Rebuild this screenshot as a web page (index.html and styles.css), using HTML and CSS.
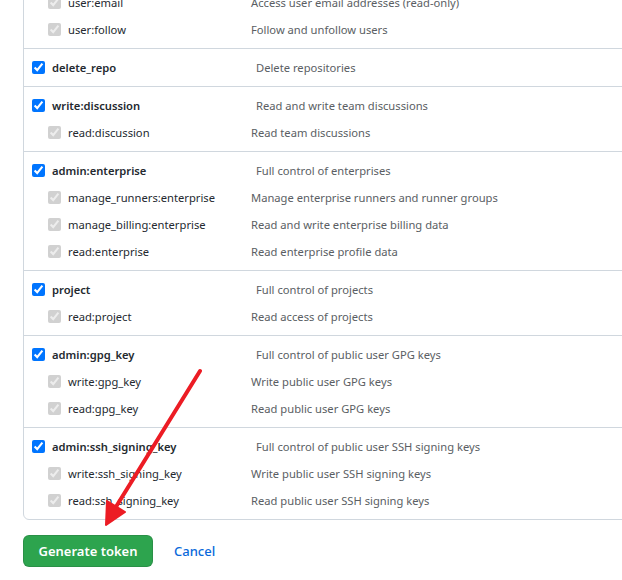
FILE: index.html
```html
<!DOCTYPE html>
<html lang="en">
<head>
<meta charset="utf-8">
<title>New personal access token</title>
<link rel="stylesheet" href="styles.css">
</head>
<body>
<div class="page">
  <div class="scopes">
    <div class="group">
      <div class="row parent"><label class="name"><input type="checkbox" checked>user</label><span class="desc">Update ALL user data</span></div>
      <div class="row child"><label class="name"><input type="checkbox" checked disabled>read:user</label><span class="desc">Read ALL user profile data</span></div>
      <div class="row child"><label class="name"><input type="checkbox" checked disabled>user:email</label><span class="desc">Access user email addresses (read-only)</span></div>
      <div class="row child"><label class="name"><input type="checkbox" checked disabled>user:follow</label><span class="desc">Follow and unfollow users</span></div>
    </div>
    <div class="group">
      <div class="row parent"><label class="name"><input type="checkbox" checked>delete_repo</label><span class="desc">Delete repositories</span></div>
    </div>
    <div class="group">
      <div class="row parent"><label class="name"><input type="checkbox" checked>write:discussion</label><span class="desc">Read and write team discussions</span></div>
      <div class="row child"><label class="name"><input type="checkbox" checked disabled>read:discussion</label><span class="desc">Read team discussions</span></div>
    </div>
    <div class="group">
      <div class="row parent"><label class="name"><input type="checkbox" checked>admin:enterprise</label><span class="desc">Full control of enterprises</span></div>
      <div class="row child"><label class="name"><input type="checkbox" checked disabled>manage_runners:enterprise</label><span class="desc">Manage enterprise runners and runner groups</span></div>
      <div class="row child"><label class="name"><input type="checkbox" checked disabled>manage_billing:enterprise</label><span class="desc">Read and write enterprise billing data</span></div>
      <div class="row child"><label class="name"><input type="checkbox" checked disabled>read:enterprise</label><span class="desc">Read enterprise profile data</span></div>
    </div>
    <div class="group">
      <div class="row parent"><label class="name"><input type="checkbox" checked>project</label><span class="desc">Full control of projects</span></div>
      <div class="row child"><label class="name"><input type="checkbox" checked disabled>read:project</label><span class="desc">Read access of projects</span></div>
    </div>
    <div class="group">
      <div class="row parent"><label class="name"><input type="checkbox" checked>admin:gpg_key</label><span class="desc">Full control of public user GPG keys</span></div>
      <div class="row child"><label class="name"><input type="checkbox" checked disabled>write:gpg_key</label><span class="desc">Write public user GPG keys</span></div>
      <div class="row child"><label class="name"><input type="checkbox" checked disabled>read:gpg_key</label><span class="desc">Read public user GPG keys</span></div>
    </div>
    <div class="group">
      <div class="row parent"><label class="name"><input type="checkbox" checked>admin:ssh_signing_key</label><span class="desc">Full control of public user SSH signing keys</span></div>
      <div class="row child"><label class="name"><input type="checkbox" checked disabled>write:ssh_signing_key</label><span class="desc">Write public user SSH signing keys</span></div>
      <div class="row child"><label class="name"><input type="checkbox" checked disabled>read:ssh_signing_key</label><span class="desc">Read public user SSH signing keys</span></div>
    </div>
  </div>
  <div class="actions">
    <button class="btn-primary" type="button">Generate token</button>
    <a class="btn-link" href="#">Cancel</a>
  </div>
  <svg class="arrow" width="622" height="580" viewBox="0 0 622 580" aria-hidden="true">
    <line x1="200" y1="371" x2="114" y2="510" stroke="#ec1c24" stroke-width="4" stroke-linecap="round"/>
    <polygon points="106,525 107,501 125,512" fill="#ec1c24" stroke="#ec1c24" stroke-width="2" stroke-linejoin="round"/>
  </svg>
</div>
</body>
</html>
```

FILE: styles.css
```css
html, body {
  margin: 0;
  padding: 0;
  overflow: hidden;
  background: #ffffff;
}

.page {
  position: relative;
  width: 622px;
  height: 580px;
  overflow: hidden;
  font-family: "Noto Sans", "Liberation Sans", sans-serif;
  font-size: 11.2px;
  color: #24292f;
}

.scopes {
  margin: -71px 0 0 23px;
  width: 660px;
  border: 1px solid #d0d7de;
  border-radius: 6px;
}

.group {
  padding: 5px 0;
  border-top: 1px solid #d0d7de;
}

.group:first-child {
  border-top: 0;
}

.row {
  display: flex;
  align-items: center;
  height: 27px;
}

.name {
  display: flex;
  align-items: center;
  flex: none;
}

.name input {
  margin: 0 7px 0 0;
  width: 13px;
  height: 13px;
}

.parent .name {
  width: 224px;
  padding-left: 8px;
  font-weight: 600;
}

.child .name {
  width: 203px;
  padding-left: 24px;
}

.desc {
  color: #5a5e63;
}

.actions {
  display: flex;
  align-items: center;
  gap: 21px;
  margin: 15px 0 0 23px;
}

.btn-primary {
  height: 32px;
  width: 130px;
  padding: 0;
  border: 1px solid rgba(27, 31, 36, 0.15);
  border-radius: 6px;
  background: #2da44e;
  color: #ffffff;
  font-family: "Noto Sans", "Liberation Sans", sans-serif;
  font-size: 13px;
  font-weight: 600;
}

.btn-link {
  color: #0969da;
  text-decoration: none;
  font-family: "Noto Sans", "Liberation Sans", sans-serif;
  font-size: 13px;
  font-weight: 500;
}

.arrow {
  position: absolute;
  left: 0;
  top: 0;
  pointer-events: none;
}
```
